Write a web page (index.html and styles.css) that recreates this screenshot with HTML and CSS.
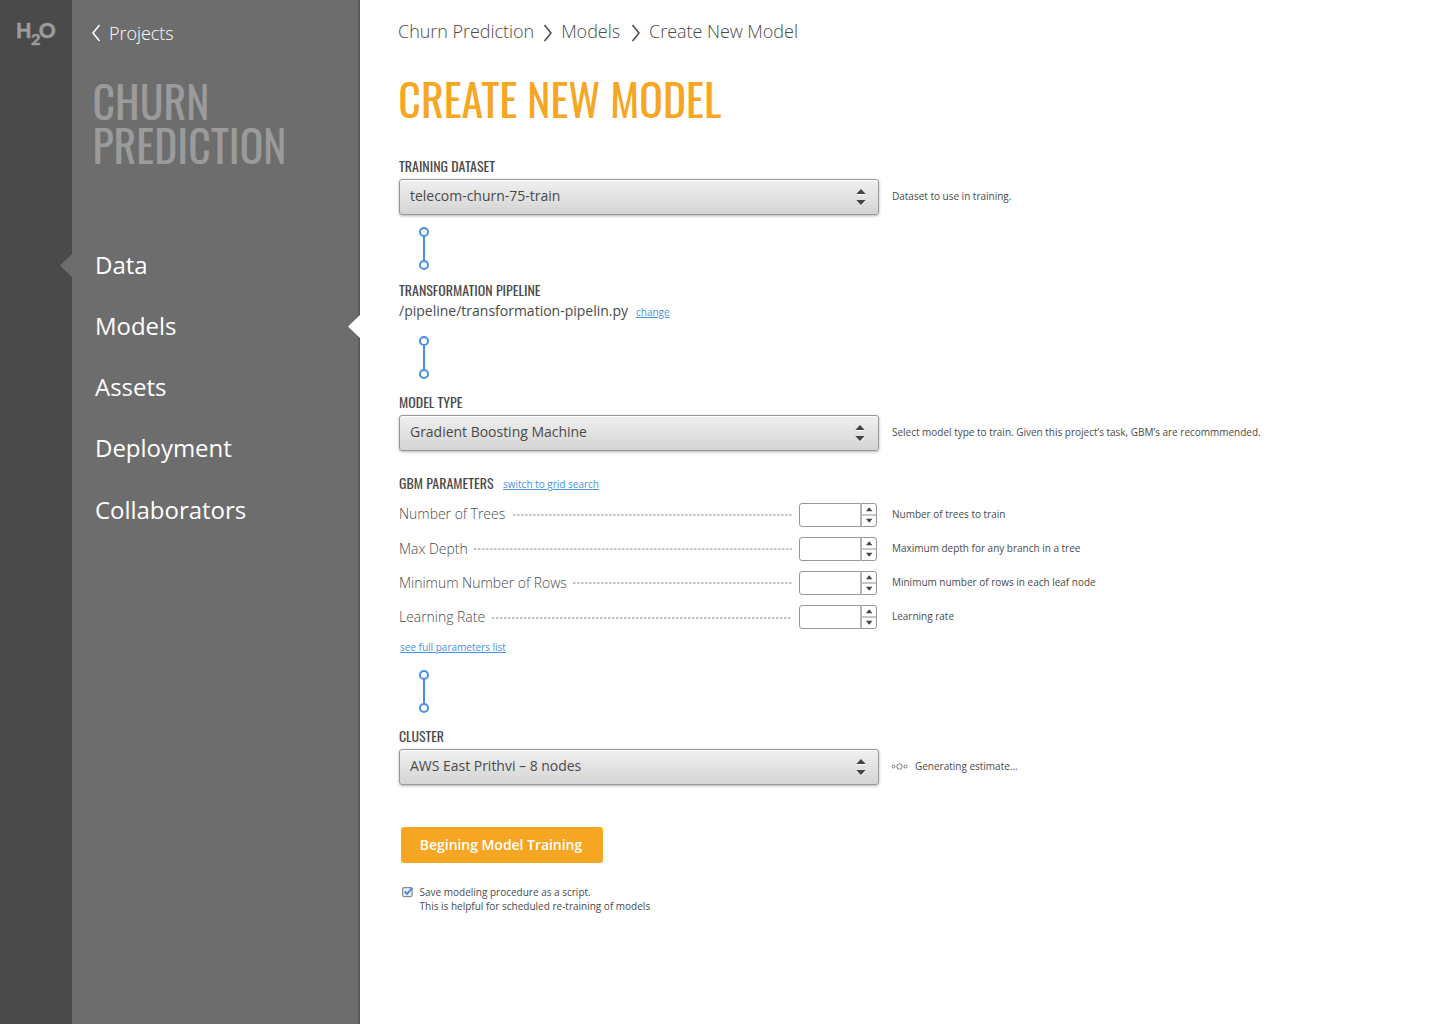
FILE: index.html
```html
<!DOCTYPE html>
<html lang="en">
<head>
<meta charset="utf-8">
<title>Create New Model</title>
<link rel="stylesheet" href="styles.css">
</head>
<body>
<svg class="defs" width="0" height="0" aria-hidden="true">
  <symbol id="link" viewBox="0 0 12 45"><path d="M6 10V35" stroke="#4a90e2" stroke-width="2"/><circle cx="6" cy="6" r="4" fill="#fff" stroke="#4a90e2" stroke-width="2"/><circle cx="6" cy="39" r="4" fill="#fff" stroke="#4a90e2" stroke-width="2"/></symbol>
  <symbol id="arrows" viewBox="0 0 10 18"><path d="M.3 6L5 1l4.700 5zM.3 12L5 17l4.700-5z" fill="#444"/><path d="M.5 6.500h9M5.500 17.500L10 12.500" stroke="#fff" fill="none" stroke-opacity=".8"/></symbol>
  <symbol id="spin" viewBox="0 0 14 24"><path d="M0 12H14" stroke="#b4b4b4" stroke-width="1.500"/><path d="M4 8.300L7.200 4.300L10.400 8.300zM4 15.700L7.200 19.700L10.400 15.700z" fill="#444"/></symbol>
  <symbol id="chev" viewBox="0 0 10 18"><path d="M1.500 1L8 9L1.500 17" fill="none" stroke="currentColor" stroke-width="1.500"/></symbol>
</svg>
<div class="app">
  <aside class="rail">
    <svg width="40" height="24" class="logo"><text x="-1" y="16" font-size="20" textLength="15.500" lengthAdjust="spacingAndGlyphs">H</text><text x="14" y="22.500" font-size="15.500" textLength="9.500" lengthAdjust="spacingAndGlyphs">2</text><text x="21.800" y="16" font-size="20" textLength="17" lengthAdjust="spacingAndGlyphs">O</text></svg>
    <span class="rail-arrow"></span>
  </aside>
  <nav class="side">
    <a class="back"><svg width="10" height="18"><use href="#chev" transform="matrix(-1 0 0 1 10 0)"/></svg><span>Projects</span></a>
    <svg class="project osw" width="200" height="90"><text x="-.5" y="40" textLength="117" lengthAdjust="spacingAndGlyphs">CHURN</text><text x="-.5" y="84" textLength="194" lengthAdjust="spacingAndGlyphs">PREDICTION</text></svg>
    <div class="menu"><a>Data</a><a>Models</a><a>Assets</a><a>Deployment</a><a>Collaborators</a></div>
    <span class="side-arrow"></span>
  </nav>
  <main>
    <div class="crumbs"><span>Churn Prediction</span><svg class="c1" width="10" height="18"><use href="#chev"/></svg><span>Models</span><svg class="c2" width="10" height="18"><use href="#chev"/></svg><span>Create New Model</span></div>
    <svg class="title osw" width="330" height="48"><text x="-.7" y="42" textLength="323" lengthAdjust="spacingAndGlyphs">CREATE NEW MODEL</text></svg>

    <svg class="label l1 osw" width="110" height="20"><text x="0" y="15" textLength="96" lengthAdjust="spacingAndGlyphs">TRAINING DATASET</text></svg>
    <div class="row"><div class="select"><span>telecom-churn-75-train</span><svg width="10" height="18"><use href="#arrows"/></svg></div><span class="help">Dataset to use in training.</span></div>
    <svg class="link k1" width="12" height="45"><use href="#link"/></svg>

    <svg class="label l2 osw" width="150" height="20"><text x="0" y="15" textLength="141.500" lengthAdjust="spacingAndGlyphs">TRANSFORMATION PIPELINE</text></svg>
    <div class="path"><span class="file">/pipeline/transformation-pipelin.py</span><a>change</a></div>
    <svg class="link k2" width="12" height="45"><use href="#link"/></svg>

    <svg class="label l3 osw" width="80" height="20"><text x="0" y="15" textLength="63.500" lengthAdjust="spacingAndGlyphs">MODEL TYPE</text></svg>
    <div class="row"><div class="select model"><span>Gradient Boosting Machine</span><svg width="10" height="18"><use href="#arrows"/></svg></div><span class="help">Select model type to train. Given this project’s task, GBM’s are recommmended.</span></div>

    <div class="gbm"><svg class="label osw" width="104" height="20"><text x="0" y="15" textLength="94.500" lengthAdjust="spacingAndGlyphs">GBM PARAMETERS</text></svg><a>switch to grid search</a></div>
    <div class="param"><span class="name n1">Number of Trees</span><i></i><div class="num"><svg width="16" height="24"><use href="#spin" width="14" height="24"/></svg></div><span class="help">Number of trees to train</span></div>
    <div class="param"><span class="name n2">Max Depth</span><i></i><div class="num"><svg width="16" height="24"><use href="#spin" width="14" height="24"/></svg></div><span class="help">Maximum depth for any branch in a tree</span></div>
    <div class="param"><span class="name n3">Minimum Number of Rows</span><i></i><div class="num"><svg width="16" height="24"><use href="#spin" width="14" height="24"/></svg></div><span class="help">Minimum number of rows in each leaf node</span></div>
    <div class="param"><span class="name n4">Learning Rate</span><i></i><div class="num"><svg width="16" height="24"><use href="#spin" width="14" height="24"/></svg></div><span class="help">Learning rate</span></div>
    <a class="full">see full parameters list</a>
    <svg class="link k2" width="12" height="45"><use href="#link"/></svg>

    <svg class="label l3 osw" width="60" height="20"><text x="0" y="15" textLength="45" lengthAdjust="spacingAndGlyphs">CLUSTER</text></svg>
    <div class="row"><div class="select"><span>AWS East Prithvi – 8 nodes</span><svg width="10" height="18"><use href="#arrows"/></svg></div><span class="help est"><svg width="18" height="8" fill="none" stroke="#777"><circle cx="2.500" cy="4.500" r="1.500"/><circle cx="8.500" cy="4.500" r="2.700"/><circle cx="14.500" cy="4.500" r="1.500"/></svg>Generating estimate...</span></div>

    <button>Begining Model Training</button>
    <div class="save"><svg width="12" height="12"><rect x=".6" y="1.600" width="9.500" height="9" rx="1.500" fill="#eee" stroke="#8a8a8a" stroke-width="1.200"/><path d="M2.600 5.500L5 8L10.300 1.800" fill="none" stroke="#4a90e2" stroke-width="2"/></svg><p>Save modeling procedure as a script.<br>This is helpful for scheduled re-training of models</p></div>
  </main>
</div>
</body>
</html>
```
FILE: styles.css
```css
* { box-sizing: border-box; }
body { margin: 0; font-family: "Open Sans", sans-serif; color: #4a4a4a; background: #fff; }
svg { display: block; flex: none; }
span, a { white-space: nowrap; }
.defs { position: absolute; }
.app { display: flex; height: 1024px; }
.rail { width: 72px; background: #4a4a4a; position: relative; padding: 22px 0 0 17px; }
.logo { font-family: Lato, sans-serif; font-weight: 900; fill: #9b9b9b; stroke: #9b9b9b; stroke-width: .4px; overflow: visible; }
.rail-arrow, .side-arrow { position: absolute; right: 0; width: 12px; height: 23px; clip-path: polygon(100% 0, 100% 100%, 0 50%); }
.rail-arrow { top: 254px; background: #6d6d6d; }
.side-arrow { top: 315px; background: #fff; }
.side { width: 288px; background: linear-gradient(to left, #505050, #666 2px, #6d6d6d 4px); position: relative; padding: 21px 0 0 19px; color: #fff; }
.back { display: flex; align-items: center; gap: 8px; height: 24px; line-height: 24px; font-size: 18px; font-weight: 300; letter-spacing: -.06px; }
.osw { font-family: Oswald, "Roboto Condensed", Roboto, sans-serif; overflow: visible; }
.project { margin: 35px 0 0 2px; font-size: 44.500px; fill: #9b9b9b; }
.menu { display: flex; flex-direction: column; margin: 63.600px 0 0 4px; font-size: 24px; line-height: 61.25px; letter-spacing: -.03px; }
main { flex: 1; padding: 19px 0 0 39px; }
.crumbs { display: flex; align-items: center; height: 24px; margin-left: -1px; font-size: 18px; font-weight: 300; line-height: 24px; letter-spacing: -.04px; }
.c1 { margin: 3px 8px 0 9px; }
.c2 { margin: 3px 8px 0 11px; }
.title { margin-top: 33px; font-size: 44.500px; fill: #f6a623; }
.label { font-size: 14px; fill: #4a4a4a; }
.l1 { margin-top: 33px; }
.l2 { margin-top: 10px; }
.l3 { margin-top: 13px; }
.row { display: flex; align-items: center; margin-top: 2px; height: 36px; }
.select { display: flex; justify-content: space-between; width: 480px; height: 36px; padding: 8px 12px 0 10px; border: 1px solid #979797; border-radius: 3px; background: linear-gradient(#f0f0f0, #d4d4d4); box-shadow: 0 1px 3px rgba(0,0,0,.3), inset 0 1px 0 #fff; font-size: 14px; line-height: 15px; letter-spacing: -.02px; }
.model { padding-right: 13px; }
.help { margin-left: 13px; padding-bottom: 2px; font-size: 10px; line-height: 14px; letter-spacing: -.01px; }
.est { display: flex; align-items: center; gap: 6px; margin-left: 12px; }
.link { margin-left: 19px; }
.k1 { margin-top: 11px; }
.k2 { margin-top: 14px; }
.path { display: flex; height: 20px; line-height: 20px; font-size: 14px; }
.path a { line-height: 22px; }
.file { width: 237px; }
a { text-decoration: none; }
main a { font-size: 10px; color: #4a90e2; text-decoration: underline; }
.gbm { display: flex; height: 20px; margin: 23px 0 4px; line-height: 20px; }
.param { display: flex; align-items: center; height: 34px; }
.name { font-size: 14px; font-weight: 300; line-height: 20px; letter-spacing: -.03px; }
.param i { flex: none; height: 2px; margin-right: 7px; background: repeating-linear-gradient(90deg, #c2c2c2 0 2px, #e2e2e2 2px 3px, #fff 3px 4px); }
.n1 { width: 114px; padding-bottom: 2px; } .n1 + i { width: 279px; }
.n2 { width: 75px; } .n2 + i { width: 318px; }
.n3 { width: 174px; } .n3 + i { width: 219px; }
.n4 { width: 93px; } .n4 + i { width: 300px; margin-top: 2px; }
.num { display: flex; justify-content: flex-end; width: 78px; height: 24px; border: 1px solid #979797; border-radius: 3px; }
.num svg { margin-top: -1px; border-left: 2px solid #b4b4b4; }
.param .help { margin-left: 15px; }
.full { display: block; margin: 5px 0 0 1px; line-height: 16px; }
button { display: block; width: 202px; height: 36px; margin: 42px 0 0 2px; padding: 0 2px 0 0; border: 0; border-radius: 3px; background: #f6a623; color: #fff; font: 600 14px/36px "Open Sans", sans-serif; letter-spacing: -.04px; }
.save { display: flex; gap: 5.500px; margin: 22px 0 0 3px; font-size: 10px; line-height: 14px; }
.save svg { margin-top: 1px; }
.save p { margin: 0; }
```
